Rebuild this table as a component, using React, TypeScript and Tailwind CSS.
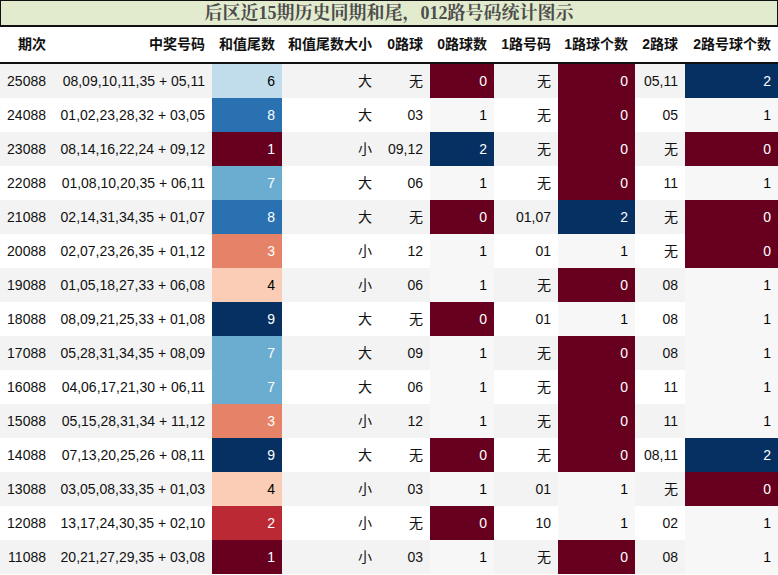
import React from "react";

type Row = [string, string, number, string, string, number, string, number, string, number];

const ROWS: Row[] = [
  ["25088", "08,09,10,11,35 + 05,11", 6, "大", "无", 0, "无", 0, "05,11", 2],
  ["24088", "01,02,23,28,32 + 03,05", 8, "大", "03", 1, "无", 0, "05", 1],
  ["23088", "08,14,16,22,24 + 09,12", 1, "小", "09,12", 2, "无", 0, "无", 0],
  ["22088", "01,08,10,20,35 + 06,11", 7, "大", "06", 1, "无", 0, "11", 1],
  ["21088", "02,14,31,34,35 + 01,07", 8, "大", "无", 0, "01,07", 2, "无", 0],
  ["20088", "02,07,23,26,35 + 01,12", 3, "小", "12", 1, "01", 1, "无", 0],
  ["19088", "01,05,18,27,33 + 06,08", 4, "小", "06", 1, "无", 0, "08", 1],
  ["18088", "08,09,21,25,33 + 01,08", 9, "大", "无", 0, "01", 1, "08", 1],
  ["17088", "05,28,31,34,35 + 08,09", 7, "大", "09", 1, "无", 0, "08", 1],
  ["16088", "04,06,17,21,30 + 06,11", 7, "大", "06", 1, "无", 0, "11", 1],
  ["15088", "05,15,28,31,34 + 11,12", 3, "小", "12", 1, "无", 0, "11", 1],
  ["14088", "07,13,20,25,26 + 08,11", 9, "大", "无", 0, "无", 0, "08,11", 2],
  ["13088", "03,05,08,33,35 + 01,03", 4, "小", "03", 1, "01", 1, "无", 0],
  ["12088", "13,17,24,30,35 + 02,10", 2, "小", "无", 0, "10", 1, "02", 1],
  ["11088", "20,21,27,29,35 + 03,08", 1, "小", "03", 1, "无", 0, "08", 1],
];

const HEADERS = ["期次", "中奖号码", "和值尾数", "和值尾数大小", "0路球", "0路球数", "1路号码", "1路球个数", "2路球", "2路号球个数"];

// RdBu heat colours, 1..9 for the tail digit
const TAIL_BG: Record<number, string> = {
  1: "bg-[#67001f] text-white",
  2: "bg-[#bb2a34] text-white",
  3: "bg-[#e58267] text-white",
  4: "bg-[#fbcdb6] text-black",
  5: "bg-[#f7f7f7] text-black",
  6: "bg-[#c1ddeb] text-black",
  7: "bg-[#6bacd1] text-white",
  8: "bg-[#2a71b2] text-white",
  9: "bg-[#053061] text-white",
};

// 0..2 counts
const COUNT_BG: Record<number, string> = {
  0: "bg-[#67001f] text-white",
  1: "bg-[#f7f7f7] text-black",
  2: "bg-[#053061] text-white",
};

const GRID = "grid grid-cols-[53px_159px_70px_97px_51px_64px_64px_77px_50px_93px]";

const Cell = ({ children, className = "" }: { children: React.ReactNode; className?: string }) => (
  <div className={`flex items-center justify-end pr-[7px] whitespace-nowrap ${className}`}>{children}</div>
);

export default function App() {
  return (
    <div
      className="w-[778px] h-[575px] bg-white overflow-hidden text-[14px] text-[#111]"
      style={{ fontFamily: '"Liberation Sans", "Noto Sans CJK SC", sans-serif' }}
    >
      <div className="h-[27px] bg-[#e2ebcd] border border-b-2 border-[#111] flex items-center justify-center">
        <span
          className="text-[18px] font-bold text-[#4d4d4d]"
          style={{ fontFamily: '"Liberation Serif", "Noto Serif CJK SC", "Noto Sans CJK SC", serif' }}
        >
          后区近15期历史同期和尾，012路号码统计图示
        </span>
      </div>

      <div className={`${GRID} h-[37px] border-b-2 border-[#111] font-bold`}>
        {HEADERS.map((h) => (
          <Cell key={h}>{h}</Cell>
        ))}
      </div>

      {ROWS.map((r, i) => (
        <div key={r[0]} className={`${GRID} h-[34px] ${i % 2 === 0 ? "bg-[#f3f3f3]" : "bg-white"}`}>
          <Cell>{r[0]}</Cell>
          <Cell>{r[1]}</Cell>
          <Cell className={TAIL_BG[r[2]]}>{r[2]}</Cell>
          <Cell>{r[3]}</Cell>
          <Cell>{r[4]}</Cell>
          <Cell className={COUNT_BG[r[5]]}>{r[5]}</Cell>
          <Cell>{r[6]}</Cell>
          <Cell className={COUNT_BG[r[7]]}>{r[7]}</Cell>
          <Cell>{r[8]}</Cell>
          <Cell className={COUNT_BG[r[9]]}>{r[9]}</Cell>
        </div>
      ))}
    </div>
  );
}
